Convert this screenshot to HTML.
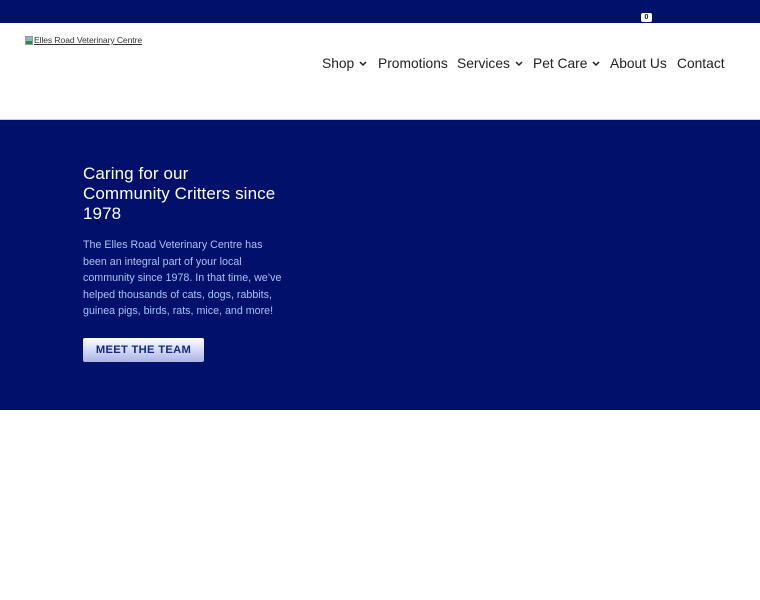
<!DOCTYPE html>
<html><head><meta charset="utf-8"><style>
body{margin:0;width:760px;height:600px;background:#fff;font-family:"Liberation Sans",sans-serif;overflow:hidden;position:relative}
.top{position:absolute;left:0;top:0;width:760px;height:23px;background:#00106b}
.badge{position:absolute;left:641px;top:13px;width:11px;height:9px;background:#fff;border-radius:2px;color:#00106b;font-size:7px;font-weight:bold;text-align:center;line-height:9px}
.hdr{position:absolute;left:0;top:23px;width:760px;height:96px;background:#fff;border-bottom:1px solid #c8cdd2}
.logo{position:absolute;left:25px;top:12px;font-size:8.6px;color:#333;text-decoration:underline;display:flex;align-items:center;letter-spacing:-0.1px}
.logo i{display:inline-block;width:8px;height:9px;background:linear-gradient(#8fb0d8 55%,#2f8a3a 55%);margin-right:1px;border:1px solid #999;box-sizing:border-box}
.nav span{position:absolute;top:56px;font-size:13.8px;color:#222;white-space:nowrap;line-height:16px}
.nav span svg{margin-left:5px;vertical-align:1px}
.hero{position:absolute;left:0;top:120px;width:760px;height:290px;background:#00106b}
h1{position:absolute;left:83px;top:164px;margin:0;font-weight:normal;color:#fff;font-size:17px;line-height:20px;white-space:nowrap;letter-spacing:0.1px}
p{position:absolute;left:83px;top:237px;margin:0;color:#a9c2f5;font-size:10.7px;line-height:16.5px;white-space:nowrap}
.btn{position:absolute;left:83px;top:338px;width:121px;height:24px;border-radius:2px;background:linear-gradient(#fff,#aab3e6);color:#0f2a8c;font-weight:bold;font-size:11.2px;text-align:center;line-height:24px;letter-spacing:.3px}
</style></head><body>
<div class="top"><div class="badge">0</div></div>
<div class="hdr">
<div class="logo"><i></i>Elles Road Veterinary Centre</div>
</div>
<div class="nav">
<span style="left:322px">Shop<svg width="8" height="6" viewBox="0 0 8 6"><path d="M1 1l3 3 3-3" fill="none" stroke="#222" stroke-width="1.5"/></svg></span>
<span style="left:378px">Promotions</span>
<span style="left:457px">Services<svg width="8" height="6" viewBox="0 0 8 6"><path d="M1 1l3 3 3-3" fill="none" stroke="#222" stroke-width="1.5"/></svg></span>
<span style="left:533px">Pet Care<svg width="8" height="6" viewBox="0 0 8 6"><path d="M1 1l3 3 3-3" fill="none" stroke="#222" stroke-width="1.5"/></svg></span>
<span style="left:610px">About Us</span>
<span style="left:677px">Contact</span>
</div>
<div class="hero"></div>
<h1>Caring for our<br>Community Critters since<br>1978</h1>
<p>The Elles Road Veterinary Centre has<br>been an integral part of your local<br>community since 1978. In that time, we’ve<br>helped thousands of cats, dogs, rabbits,<br>guinea pigs, birds, rats, mice, and more!</p>
<div class="btn">MEET THE TEAM</div>
</body></html>
